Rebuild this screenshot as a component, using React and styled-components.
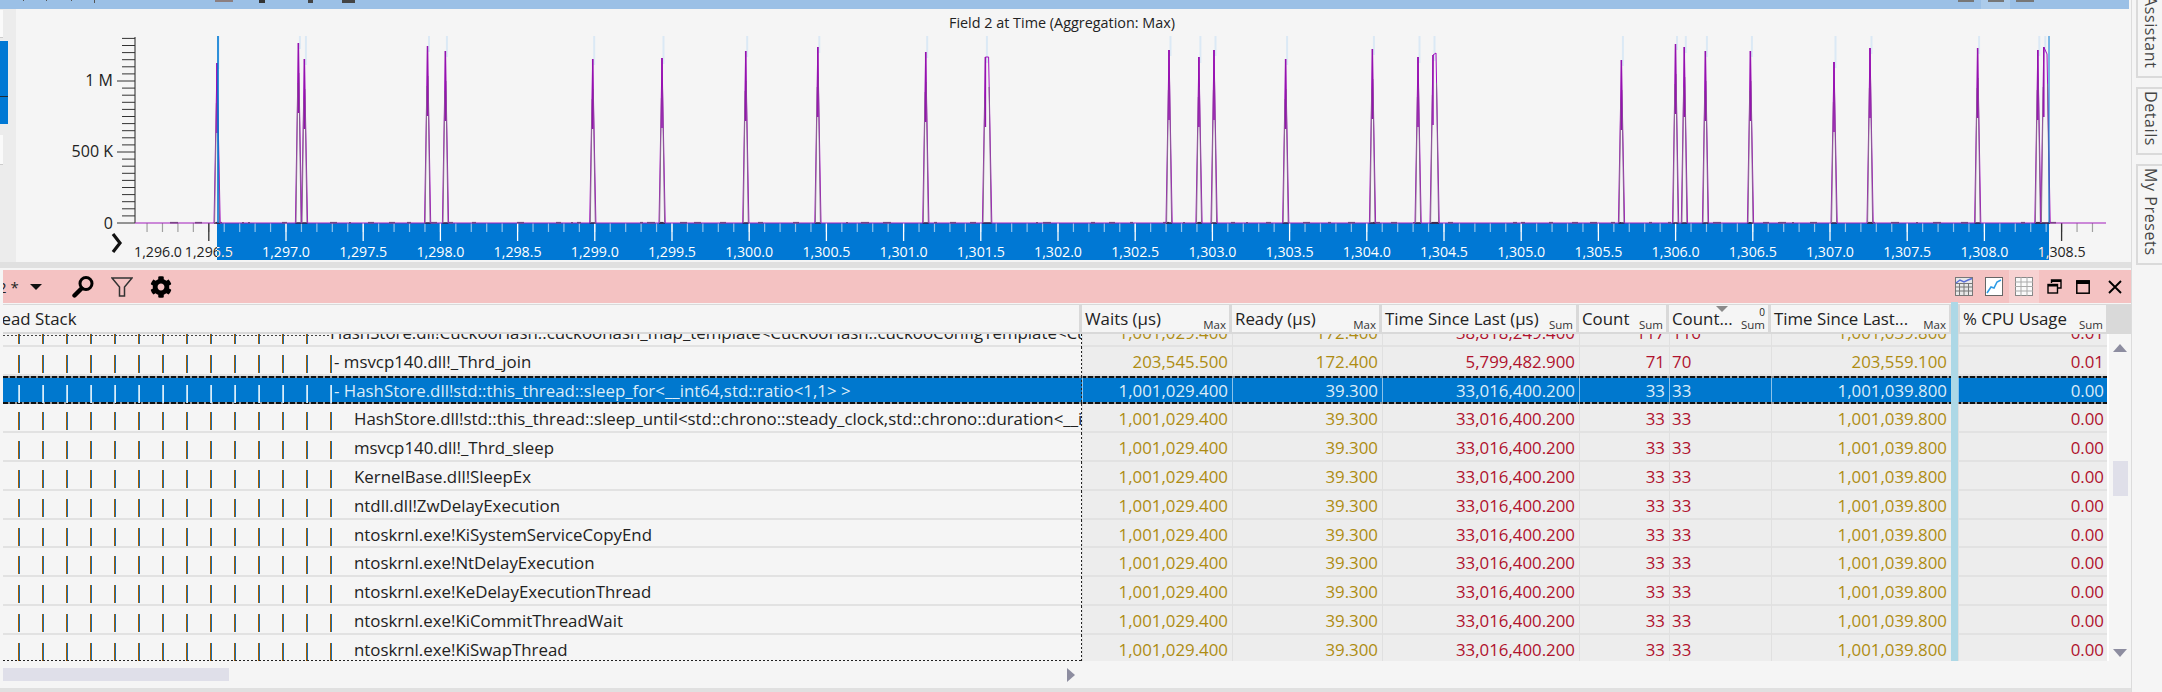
import React from 'react';
import styled, { createGlobalStyle } from 'styled-components';
import { FaCog } from 'react-icons/fa';

const COLUMNS = '1079px 150px 150px 197px 90px 102px 180px 7px 150px';
const ROW_H = 28.8;

const GlobalStyle = createGlobalStyle`
  html, body { margin: 0; padding: 0; background: #f5f5f5; overflow: hidden; }
  #root { width: 2162px; height: 692px; }
  * { box-sizing: border-box; }
`;

const Page = styled.div`
  display: flex;
  width: 2162px;
  height: 692px;
  font-family: 'Open Sans', 'Noto Sans', sans-serif;
  font-size: 16.85px;
  color: #222;
  overflow: hidden;
`;

const Main = styled.div`
  width: 2134px;
  display: flex;
  flex-direction: column;
  border-right: 1px solid #dcdcdc;
`;

/* ---- top title bar, only its lower edge is on the picture ---- */
const TopBar = styled.div`
  height: 9px;
  margin-right: 2px;
  background: #9bc0e6;
  display: flex;
  align-items: flex-start;
`;

const TopBit = styled.span`
  display: block;
  margin-left: ${(p) => p.$gap}px;
  width: ${(p) => p.$w}px;
  height: ${(p) => p.$h || 2}px;
  background: ${(p) => p.$color || '#555'};
`;

const TopHighlight = styled.span`
  display: flex;
  justify-content: center;
  margin-left: 7px;
  width: 29px;
  height: 9px;
  background: #accbea;
`;

/* ---- chart ---- */
const ChartPanel = styled.div`
  height: 253px;
  display: flex;
  background: #f5f5f5;
`;

const LeftStrip = styled.div`
  width: 16px;
  flex: none;
  background: #ececec;
  display: flex;
  flex-direction: column;
  gap: 3px;
`;

const StripTab = styled.div`
  width: 3px;
  height: ${(p) => p.$h}px;
  margin-top: ${(p) => p.$top || 0}px;
  background: #fafafa;
  border-bottom: 1px solid #ccc;
`;

const StripBlue = styled.div`
  width: 8px;
  height: 83px;
  background: linear-gradient(#0078d4 0 55px, #1c2b3a 55px 56px, #0078d4 56px);
`;

const ChartSvg = styled.svg`
  display: block;
  flex: 1;
  font-family: 'Open Sans', 'Noto Sans', sans-serif;
`;

const Splitter = styled.div`
  height: 6px;
  background: #e0e0e0;
`;

/* ---- table panel ---- */
const Panel = styled.div`
  flex: 1;
  display: flex;
  flex-direction: column;
  padding: 2px 0 0 3px;
  min-height: 0;
`;

const PinkBar = styled.div`
  height: 33px;
  background: #f4c2c2;
  display: flex;
  align-items: center;
  overflow: hidden;
`;

const PresetName = styled.span`
  margin-left: -5px;
  font-size: 15px;
  width: 25px;
  white-space: pre;
`;

const Caret = styled.span`
  width: 0;
  height: 0;
  margin: 1px 0 0 7px;
  border-left: 6px solid transparent;
  border-right: 6px solid transparent;
  border-top: 6px solid #111;
`;

const ToolIcon = styled.span`
  display: flex;
  margin-left: ${(p) => p.$gap}px;
  color: #000;
`;

const BarSpacer = styled.span`
  flex: 1;
`;

const ViewIcon = styled.span`
  display: flex;
  align-items: center;
  justify-content: center;
  height: 33px;
  width: ${(p) => p.$w}px;
  margin-left: ${(p) => p.$gap || 0}px;
  background: ${(p) => (p.$active ? '#f7d2d2' : 'transparent')};
`;

const TableRow = styled.div`
  flex: 1;
  display: flex;
  min-height: 0;
`;

const TableCol = styled.div`
  width: 2104px;
  display: flex;
  flex-direction: column;
`;

const HeaderRow = styled.div`
  display: grid;
  grid-template-columns: ${COLUMNS};
  height: 30px;
  margin-top: 1px;
  padding: 0 0 2px;
  background: #d9d9d9;
`;

const HeadCell = styled.div`
  position: relative;
  display: flex;
  justify-content: space-between;
  align-items: flex-end;
  background: #f5f5f5;
  margin: 1px ${(p) => (p.$last ? 2 : 3)}px 0 ${(p) => p.$inset || 0}px;
  padding: 0 3px 0 3px;
  white-space: nowrap;
  overflow: hidden;
`;

const HeadLabel = styled.span`
  align-self: center;
  margin-left: ${(p) => p.$shift || 0}px;
  line-height: 24px;
`;

const HeadAgg = styled.span`
  font-size: 11.5px;
  line-height: 14px;
  color: #333;
`;

const SortMark = styled.span`
  position: absolute;
  top: 1px;
  left: 47px;
  border-left: 6px solid transparent;
  border-right: 6px solid transparent;
  border-top: 6px solid #8a8a8a;
`;

const SortIndex = styled.span`
  position: absolute;
  top: 1px;
  right: 3px;
  font-size: 10px;
  line-height: 12px;
`;

const HeadBar = styled.div`
  background: #add8e6;
  margin-top: -2px;
  margin-bottom: -2px;
`;

const Viewport = styled.div`
  position: relative;
  height: 329px;
  overflow: hidden;

  &::before {
    content: '';
    position: absolute;
    z-index: 1;
    top: 1px;
    left: 0;
    width: 327px;
    height: 1px;
    background: repeating-linear-gradient(90deg, #444 0 2px, transparent 2px 4px);
  }

  &::after {
    content: '';
    position: absolute;
    z-index: 1;
    bottom: 0;
    left: 0;
    width: 1079px;
    height: 1px;
    background: repeating-linear-gradient(90deg, #222 0 2px, transparent 2px 4px);
  }
`;

const Rows = styled.div`
  margin-top: -16px;
`;

const Row = styled.div`
  display: grid;
  grid-template-columns: ${COLUMNS};
  height: ${ROW_H}px;
  color: ${(p) => (p.$selected ? '#dcecf8' : '#222')};
  background: ${(p) =>
    p.$selected
      ? `repeating-linear-gradient(90deg, #111 0 5px, #999 5px 7px) top / 100% 2px no-repeat,
         repeating-linear-gradient(90deg, #111 0 5px, #999 5px 7px) bottom / 100% 2px no-repeat,
         #0078ce`
      : 'transparent'};
  box-shadow: ${(p) => (p.$selected ? 'none' : 'inset 0 -2px 0 #e2e2e2')};
`;

const TreeCell = styled.div`
  display: flex;
  padding-left: 15px;
  overflow: hidden;
  white-space: nowrap;
  background: linear-gradient(#222 50%, transparent 50%) right top / 1px 4px repeat-y;
`;

const Guide = styled.span`
  flex: none;
  width: 24px;
  height: 18px;
  margin-top: ${(p) => (p.$selected ? 9 : 8)}px;
  background: ${(p) =>
    p.$selected
      ? 'linear-gradient(90deg, #9fd2f2 0 1px, #dcecf8 1px 2px, transparent 2px)'
      : 'linear-gradient(90deg, #a85f00 0 1px, #1a6fb5 1px 2px, transparent 2px)'};
`;

const TreeText = styled.span`
  margin-left: ${(p) => p.$shift || 0}px;
  line-height: 24px;
  padding-top: 3px;
`;

const ValueCell = styled.div`
  text-align: ${(p) => (p.$left ? 'left' : 'right')};
  padding: 3px ${(p) => (p.$left ? 0 : 4)}px 0 ${(p) => (p.$left ? 3 : 0)}px;
  line-height: 24px;
  white-space: nowrap;
  background: ${(p) => (p.$selected ? 'transparent' : '#ededed')};
  color: ${(p) => (p.$selected ? '#dcecf8' : p.$tone === 'gold' ? '#ae8c12' : '#b0122d')};
  box-shadow: ${(p) =>
    p.$selected
      ? 'inset 1px 0 0 rgba(255,255,255,.55)'
      : 'inset 1px 0 0 #e0e0e0, inset 0 -2px 0 #e2e2e2'};
`;

const BarCell = styled.div`
  background: #add8e6;
`;

const VScroll = styled.div`
  flex: 1;
  display: flex;
  flex-direction: column;
  align-items: center;
  border-left: 2px solid #fff;
  height: 329px;
`;

const ScrollFill = styled.div`
  height: ${(p) => p.$h}px;
  flex: none;
`;

const ArrowUp = styled.span`
  border-left: 7px solid transparent;
  border-right: 7px solid transparent;
  border-bottom: 8px solid #8d8da0;
`;

const ArrowDown = styled.span`
  border-left: 7px solid transparent;
  border-right: 7px solid transparent;
  border-top: 8px solid #8d8da0;
`;

const VThumb = styled.div`
  width: 15px;
  height: 35px;
  background: #dfdfe9;
`;

const HScroll = styled.div`
  height: 27px;
  display: flex;
  align-items: center;
  background: #f5f5f5;
`;

const HThumb = styled.div`
  width: 226px;
  height: 13px;
  background: #dfdfe9;
`;

const ArrowRight = styled.span`
  margin-left: 838px;
  border-top: 7px solid transparent;
  border-bottom: 7px solid transparent;
  border-left: 8px solid #8d8da0;
`;

const BottomEdge = styled.div`
  height: 4px;
  margin-left: -3px;
  background: #e0e0e0;
`;

/* ---- docked tabs on the right ---- */
const Rail = styled.div`
  flex: 1;
  display: flex;
  flex-direction: column;
  gap: 9px;
  padding-left: 4px;
  background: #f5f5f5;
`;

const RailTab = styled.div`
  display: flex;
  justify-content: flex-end;
  align-items: center;
  writing-mode: vertical-rl;
  height: ${(p) => p.$h}px;
  padding-bottom: 7px;
  padding-left: 2px;
  border: 2px solid #dadada;
  border-right: 0;
  border-top-width: ${(p) => (p.$cut ? 0 : 2)}px;
  font-size: 16px;
  color: #444;
  letter-spacing: 0.6px;
  white-space: nowrap;
  overflow: hidden;
`;

/* ---- data ---- */
const spikes = [
  { x: 217, y: 63 },
  { x: 298.4, y: 43 },
  { x: 304.4, y: 59 },
  { x: 427.5, y: 46 },
  { x: 445.4, y: 51 },
  { x: 592.7, y: 59 },
  { x: 662, y: 58 },
  { x: 745.7, y: 51 },
  { x: 817.8, y: 47 },
  { x: 925.7, y: 52 },
  { x: 985.4, x2: 988.6, y: 57 },
  { x: 1169, y: 50 },
  { x: 1198.9, y: 57 },
  { x: 1214, y: 50 },
  { x: 1285.6, y: 59 },
  { x: 1372.4, y: 49 },
  { x: 1418, y: 57 },
  { x: 1433, x2: 1436, y: 55, y2: 53 },
  { x: 1621.4, y: 60 },
  { x: 1675.5, y: 44 },
  { x: 1684.3, y: 47 },
  { x: 1705.4, y: 51 },
  { x: 1750.4, y: 51 },
  { x: 1834, y: 62 },
  { x: 1870, y: 48 },
  { x: 1977.6, y: 48 },
  { x: 2037.8, y: 50 },
  { x: 2043.8, x2: 2047, y: 47, y2: 54 },
];

const BASE_Y = 223;
const TICK_0 = 286;
const TICK_STEP = 77.2;
const SEL_X0 = 217;
const SEL_X1 = 2049;

const majors = [];
for (let i = -1; i <= 23; i++) {
  majors.push({ x: TICK_0 + i * TICK_STEP, label: (1297 + i * 0.5).toFixed(1) });
}
const minors = [];
for (let x = TICK_0 - TICK_STEP; x < 2106; x += TICK_STEP / 5) minors.push(x);
for (let x = TICK_0 - TICK_STEP - TICK_STEP / 5; x > 136; x -= TICK_STEP / 5) minors.push(x);

const yTicks = [];
for (let i = 0; i <= 26; i++) yTicks.push(BASE_Y - i * 7.1);

// little bumps on the base line, fixed pseudo random so the picture stays the same
const bumps = [];
let seed = 17;
for (let x = 170; x < 2070; ) {
  seed = (seed * 137 + 59) % 1009;
  const w = 2 + (seed % 7);
  if (seed % 3 !== 0) bumps.push({ x, w });
  x += w + 4 + (seed % 17);
}

const fmtLabel = (l) => `1,${l.slice(1)}`;

// only the two labels that cross an edge of the selection need both colours
const crossesEdge = (x) => Math.abs(x - SEL_X0) < 24 || Math.abs(x - SEL_X1) < 24;
const isOutside = (x) => x < SEL_X0 || x > SEL_X1;

const Chart = () => (
  <ChartSvg viewBox="16 9 2115 253" width="2115" height="253">
    <defs>
      <clipPath id="sel">
        <rect x={SEL_X0} y={BASE_Y} width={SEL_X1 - SEL_X0} height={37} />
      </clipPath>
    </defs>
    <text x="1062" y="28" textAnchor="middle" fontSize="14.4" fill="#222">
      Field 2 at Time (Aggregation: Max)
    </text>

    {/* y axis */}
    <line x1="135" y1="37" x2="135" y2={BASE_Y} stroke="#222" />
    {yTicks.map((y, i) => (
      <line key={i} x1={i % 10 === 0 ? 117 : 122} y1={y} x2="135" y2={y} stroke="#333" />
    ))}
    <text x="113" y="86" textAnchor="end" fontSize="16" fill="#222">1 M</text>
    <text x="113" y="157" textAnchor="end" fontSize="16" fill="#222">500 K</text>
    <text x="113" y="229" textAnchor="end" fontSize="16" fill="#222">0</text>

    {/* x axis: selection band, ticks, labels */}
    <rect x={SEL_X0} y={BASE_Y} width={SEL_X1 - SEL_X0} height={37} fill="#0078d4" />
    {minors.map((x, i) => {
      const inside = x > SEL_X0 && x < SEL_X1;
      return (
        <line key={i} x1={x} y1={BASE_Y} x2={x} y2={BASE_Y + 9} stroke={inside ? '#8fc3ec' : '#a0a0a0'} strokeWidth="1.2" />
      );
    })}
    {majors.map((m) => {
      const inside = m.x > SEL_X0 && m.x < SEL_X1;
      return (
        <line key={m.label} x1={m.x} y1={BASE_Y} x2={m.x} y2={BASE_Y + 18} stroke={inside ? '#fff' : '#333'} strokeWidth="1.3" />
      );
    })}
    <text x="158" y="257" textAnchor="middle" fontSize="14.2" fill="#222">1,296.0</text>
    {majors
      .filter((m) => crossesEdge(m.x) || isOutside(m.x))
      .map((m) => (
        <text key={m.label} x={m.x} y="257" textAnchor="middle" fontSize="14.2" fill="#222">
          {fmtLabel(m.label)}
        </text>
      ))}
    <g clipPath="url(#sel)">
      {majors
        .filter((m) => crossesEdge(m.x) || !isOutside(m.x))
        .map((m) => (
          <text key={m.label} x={m.x} y="257" textAnchor="middle" fontSize="14.2" fill="#fff">
            {fmtLabel(m.label)}
          </text>
        ))}
    </g>

    {/* light bands above the peaks */}
    {spikes.map((s, i) => (
      <line key={i} x1={s.x + 1.5} y1="36" x2={s.x + 1.5} y2={s.y + 6} stroke="#dbe9f5" strokeWidth="2" />
    ))}

    {/* base line */}
    <line x1="135" y1={BASE_Y} x2="2106" y2={BASE_Y} stroke="#a21cbb" strokeWidth="1.2" />
    {bumps.map((b, i) => (
      <line key={i} x1={b.x} y1={BASE_Y - 0.3} x2={b.x + b.w} y2={BASE_Y - 0.3} stroke="#7a4486" strokeWidth="1.6" />
    ))}

    {/* spikes */}
    {spikes.map((s, i) => {
      const x2 = s.x2 ?? s.x;
      const y2 = s.y2 ?? s.y;
      return (
        <g key={i} fill="none">
          <line x1={s.x - 3} y1={BASE_Y} x2={x2 + 3} y2={BASE_Y} stroke="#111" strokeWidth="1" />
          <polyline points={`${s.x - 3},${BASE_Y} ${s.x},${s.y} ${x2},${y2} ${x2 + 3.2},${BASE_Y}`} stroke="#a30fc0" strokeWidth="1" />
          <line x1={s.x - 0.6} y1={s.y + 40} x2={s.x - 2.4} y2={BASE_Y} stroke="#8a6a90" strokeWidth="1" />
          <line x1={x2 + 0.5} y1={y2 + 30} x2={x2 + 2.6} y2={BASE_Y} stroke="#8a5a96" strokeWidth="1" />
          <line x1={s.x} y1={s.y} x2={s.x} y2={s.y + 70} stroke="#9412ae" strokeWidth="1.5" />
        </g>
      );
    })}

    {/* cursors at both ends of the selection */}
    <line x1="218" y1="36" x2="218" y2={BASE_Y} stroke="#0078d4" strokeWidth="1.6" />
    <line x1={SEL_X1} y1="36" x2={SEL_X1} y2={BASE_Y} stroke="#0078d4" strokeWidth="1" />

    {/* expand chevron */}
    <path d="M113 234 L120 243 L113 252" fill="none" stroke="#111" strokeWidth="3.2" />
  </ChartSvg>
);

const SearchGlyph = () => (
  <svg width="22" height="24" viewBox="0 0 22 24">
    <circle cx="14" cy="8.5" r="6" fill="none" stroke="#000" strokeWidth="3" />
    <path d="M9.5 13.5 L2.5 20.5" stroke="#000" strokeWidth="4.4" strokeLinecap="round" />
  </svg>
);

const FunnelGlyph = () => (
  <svg width="22" height="24" viewBox="0 0 22 24">
    <path d="M1 3 H21 L13.5 12 V21 H8.5 V12 Z" fill="none" stroke="#333" strokeWidth="1.5" />
  </svg>
);

const CalcGlyph = () => (
  <svg width="18" height="19" viewBox="0 0 18 19">
    <rect x="0.5" y="0.5" width="17" height="18" fill="#e8e8e8" stroke="#777" />
    <path d="M0 6.5 H18 M0 10 H18 M0 14 H18 M4.5 6 V19 M9 6 V19 M13.5 6 V19" stroke="#777" />
    <path d="M1 6 L5 3 L9 5 L13 3 L17 1.5" fill="none" stroke="#5a6fd8" strokeWidth="1.4" />
  </svg>
);

const LineGlyph = () => (
  <svg width="18" height="19" viewBox="0 0 18 19">
    <rect x="0.5" y="0.5" width="17" height="18" fill="#fff" stroke="#666" />
    <path d="M2 16 L6 10 L9 11 L12 5 L16 3" fill="none" stroke="#2e9be6" strokeWidth="1.6" />
  </svg>
);

const GridGlyph = () => (
  <svg width="18" height="19" viewBox="0 0 18 19">
    <rect x="0.5" y="0.5" width="17" height="18" fill="#fafafa" stroke="#888" />
    <path d="M0 5 H18 M0 9.5 H18 M0 14 H18 M6 0 V19 M12 0 V19" stroke="#aaa" />
  </svg>
);

const RestoreGlyph = () => (
  <svg width="15" height="15" viewBox="0 0 15 15">
    <path d="M4.5 4 V1 H14 V9 H10.5" fill="none" stroke="#000" strokeWidth="1.4" />
    <path d="M4.5 2 H14" stroke="#000" strokeWidth="2" />
    <rect x="1" y="5.5" width="9.5" height="8.5" fill="none" stroke="#000" strokeWidth="1.4" />
    <path d="M1 6.5 H10.5" stroke="#000" strokeWidth="2" />
  </svg>
);

const MaxGlyph = () => (
  <svg width="14" height="14" viewBox="0 0 14 14">
    <rect x="0.8" y="0.8" width="12.4" height="12.4" fill="none" stroke="#000" strokeWidth="1.5" />
    <path d="M0 2.5 H14" stroke="#000" strokeWidth="3" />
  </svg>
);

const CloseGlyph = () => (
  <svg width="14" height="14" viewBox="0 0 14 14">
    <path d="M1 1 L13 13 M13 1 L1 13" stroke="#000" strokeWidth="1.9" />
  </svg>
);

const sleepRow = ['1,001,029.400', '39.300', '33,016,400.200', '33', '33', '1,001,039.800', '0.00'];

const rows = [
  {
    name: 'HashStore.dll!CuckooHash::cuckoohash_map_template<CuckooHash::cuckooConfigTemplate<CuckooHash::Config>',
    guides: 13,
    values: ['1,001,029.400', '172.400', '38,818,249.400', '117', '116', '1,001,039.800', '0.01'],
  },
  {
    name: '- msvcp140.dll!_Thrd_join',
    dash: true,
    values: ['203,545.500', '172.400', '5,799,482.900', '71', '70', '203,559.100', '0.01'],
  },
  {
    name: '- HashStore.dll!std::this_thread::sleep_for<__int64,std::ratio<1,1> >',
    dash: true,
    selected: true,
    values: sleepRow,
  },
  { name: 'HashStore.dll!std::this_thread::sleep_until<std::chrono::steady_clock,std::chrono::duration<__int64,std::ratio<1,1> > >', values: sleepRow },
  { name: 'msvcp140.dll!_Thrd_sleep', values: sleepRow },
  { name: 'KernelBase.dll!SleepEx', values: sleepRow },
  { name: 'ntdll.dll!ZwDelayExecution', values: sleepRow },
  { name: 'ntoskrnl.exe!KiSystemServiceCopyEnd', values: sleepRow },
  { name: 'ntoskrnl.exe!NtDelayExecution', values: sleepRow },
  { name: 'ntoskrnl.exe!KeDelayExecutionThread', values: sleepRow },
  { name: 'ntoskrnl.exe!KiCommitThreadWait', values: sleepRow },
  { name: 'ntoskrnl.exe!KiSwapThread', values: sleepRow },
];

const tones = ['gold', 'gold', 'red', 'red', 'red', 'gold', 'red'];

const TreeRow = ({ row }) => {
  const { name, dash, selected, values, guides = 14 } = row;
  return (
    <Row $selected={selected}>
      <TreeCell>
        {Array.from({ length: guides }, (_, i) => (
          <Guide key={i} $selected={selected} />
        ))}
        <TreeText $shift={dash ? -20 : 0}>{name}</TreeText>
      </TreeCell>
      {values.slice(0, 6).map((v, i) => (
        <ValueCell key={i} $tone={tones[i]} $selected={selected} $left={i === 4}>
          {v}
        </ValueCell>
      ))}
      <BarCell />
      <ValueCell $tone={tones[6]} $selected={selected}>
        {values[6]}
      </ValueCell>
    </Row>
  );
};

export default function App() {
  return (
    <Page>
      <GlobalStyle />
      <Main>
        <TopBar>
          <TopBit $gap={23} $w={1} $h={1} />
          <TopBit $gap={22} $w={1} $h={1} />
          <TopBit $gap={24} $w={1} $h={1} />
          <TopBit $gap={22} $w={1} $h={3} />
          <TopBit $gap={120} $w={18} $color="#8c7f80" />
          <TopBit $gap={26} $w={6} $h={3} $color="#333" />
          <TopBit $gap={43} $w={5} $h={3} $color="#444" />
          <TopBit $gap={29} $w={13} $h={3} $color="#444" />
          <TopBit $gap={1603} $w={16} $color="#777" />
          <TopHighlight>
            <TopBit $gap={0} $w={16} $color="#777" />
          </TopHighlight>
          <TopBit $gap={6} $w={18} $color="#777" />
        </TopBar>
        <ChartPanel>
          <LeftStrip>
            <StripTab $h={28} $top={1} />
            <StripBlue />
            <StripTab $h={30} $top={8} />
          </LeftStrip>
          <Chart />
        </ChartPanel>
        <Splitter />
        <Panel>
          <PinkBar>
            <PresetName>2 *</PresetName>
            <Caret />
            <ToolIcon $gap={30}>
              <SearchGlyph />
            </ToolIcon>
            <ToolIcon $gap={17}>
              <FunnelGlyph />
            </ToolIcon>
            <ToolIcon $gap={17}>
              <FaCog size={22} />
            </ToolIcon>
            <BarSpacer />
            <ViewIcon $w={18}>
              <CalcGlyph />
            </ViewIcon>
            <ViewIcon $w={18} $gap={12}>
              <LineGlyph />
            </ViewIcon>
            <ViewIcon $w={30} $gap={6} $active>
              <GridGlyph />
            </ViewIcon>
            <ViewIcon $w={15} $gap={8}>
              <RestoreGlyph />
            </ViewIcon>
            <ViewIcon $w={14} $gap={14}>
              <MaxGlyph />
            </ViewIcon>
            <ViewIcon $w={14} $gap={18}>
              <CloseGlyph />
            </ViewIcon>
            <ViewIcon $w={9} />
          </PinkBar>
          <HeaderRow>
            <HeadCell>
              <HeadLabel $shift={-31}>Thread Stack</HeadLabel>
            </HeadCell>
            <HeadCell>
              <HeadLabel>Waits (µs)</HeadLabel>
              <HeadAgg>Max</HeadAgg>
            </HeadCell>
            <HeadCell>
              <HeadLabel>Ready (µs)</HeadLabel>
              <HeadAgg>Max</HeadAgg>
            </HeadCell>
            <HeadCell>
              <HeadLabel>Time Since Last (µs)</HeadLabel>
              <HeadAgg>Sum</HeadAgg>
            </HeadCell>
            <HeadCell>
              <HeadLabel>Count</HeadLabel>
              <HeadAgg>Sum</HeadAgg>
            </HeadCell>
            <HeadCell>
              <SortMark />
              <SortIndex>0</SortIndex>
              <HeadLabel>Count...</HeadLabel>
              <HeadAgg>Sum</HeadAgg>
            </HeadCell>
            <HeadCell $last>
              <HeadLabel>Time Since Last...</HeadLabel>
              <HeadAgg>Max</HeadAgg>
            </HeadCell>
            <HeadBar />
            <HeadCell $inset={2} $last>
              <HeadLabel>% CPU Usage</HeadLabel>
              <HeadAgg>Sum</HeadAgg>
            </HeadCell>
          </HeaderRow>
          <TableRow>
            <TableCol>
              <Viewport>
                <Rows>
                  {rows.map((row) => (
                    <TreeRow key={row.name} row={row} />
                  ))}
                </Rows>
              </Viewport>
            </TableCol>
            <VScroll>
              <ScrollFill $h={10} />
              <ArrowUp />
              <ScrollFill $h={109} />
              <VThumb />
              <ScrollFill $h={153} />
              <ArrowDown />
            </VScroll>
          </TableRow>
          <HScroll>
            <HThumb />
            <ArrowRight />
          </HScroll>
          <BottomEdge />
        </Panel>
      </Main>
      <Rail>
        <RailTab $h={78} $cut>Assistant</RailTab>
        <RailTab $h={68}>Details</RailTab>
        <RailTab $h={101}>My Presets</RailTab>
      </Rail>
    </Page>
  );
}
